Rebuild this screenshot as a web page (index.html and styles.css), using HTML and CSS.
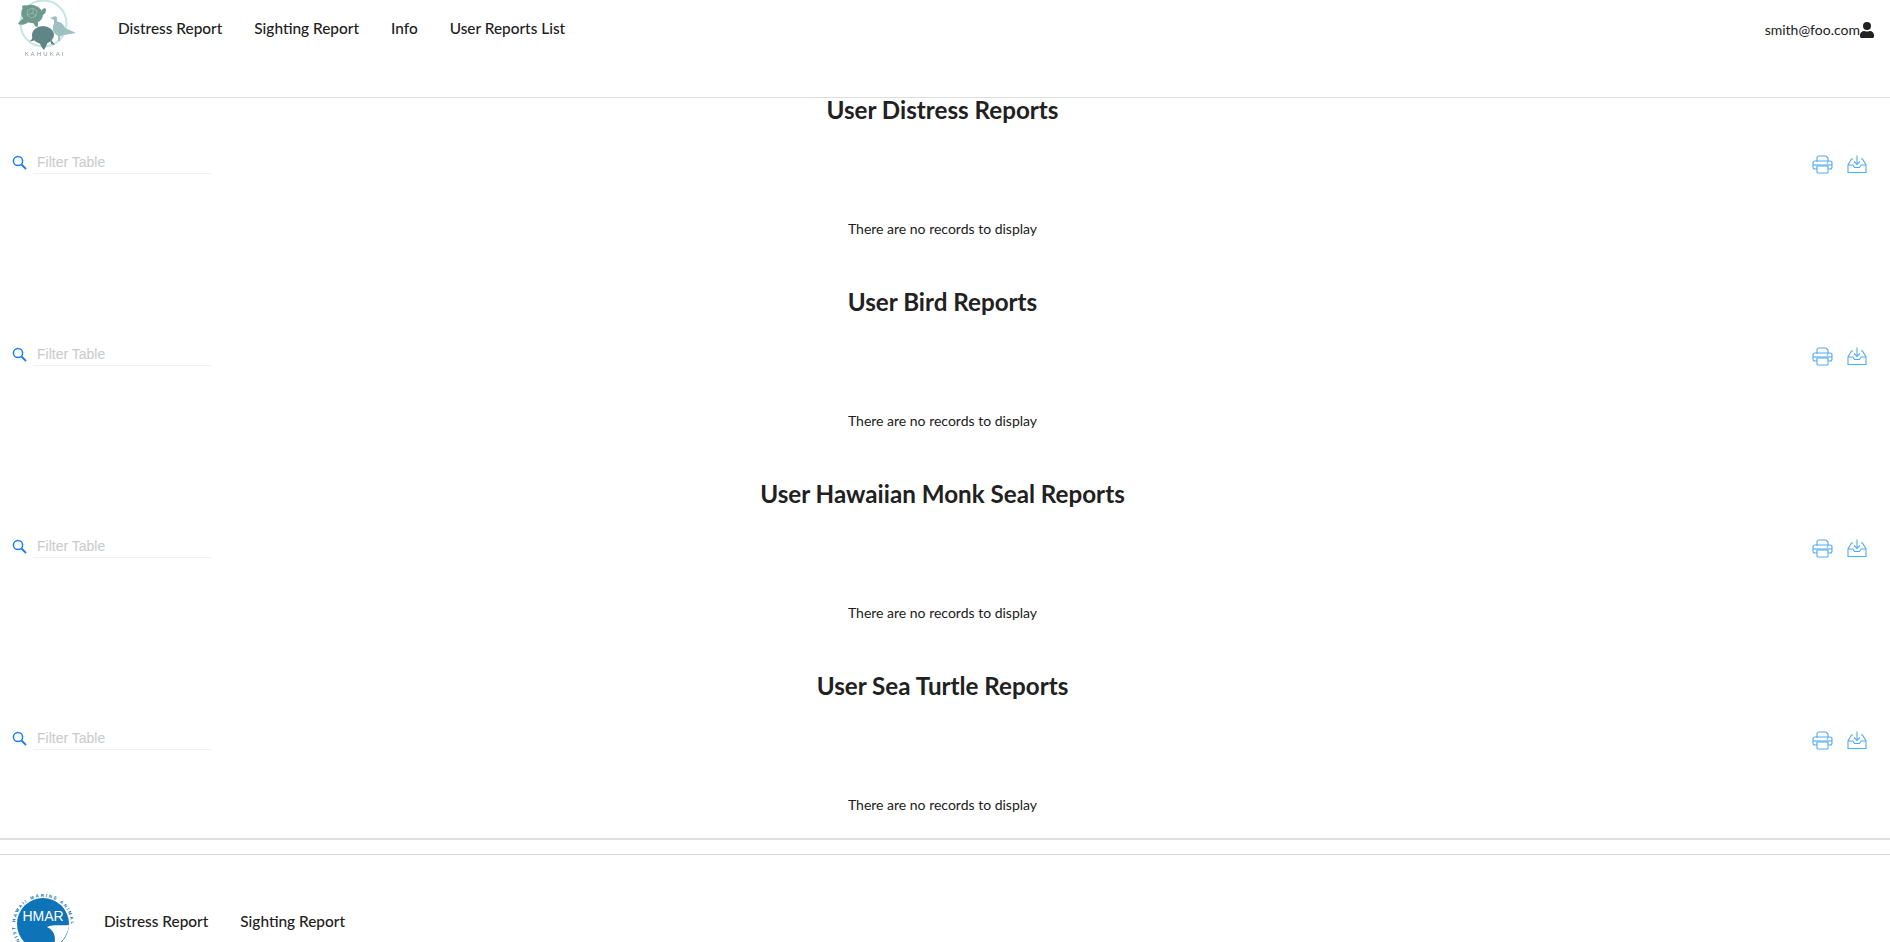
FILE: index.html
```html
<!DOCTYPE html>
<html lang="en">
<head>
  <meta charset="UTF-8">
  <title>User Reports List</title>
  <link rel="stylesheet" href="styles.css">
</head>
<body>

  <!-- Top navigation -->
  <nav class="topnav">
    <div class="brand">
      <svg class="brand-logo" width="62" height="60" viewBox="17 0 62 60">
        <circle cx="43.5" cy="23.5" r="23" fill="none" stroke="#c5e6e2" stroke-width="2"/>
        <!-- turtle -->
        <ellipse cx="32" cy="14" rx="11" ry="9" fill="#6d9a8d" transform="rotate(15 32 14)"/>
        <path d="M18 24 C20 20 24 18 27 16 L31 20 C27 24 22 26 18 24 Z M22 6 C25 4 28 6 31 8 L27 12 C24 11 22 9 22 6 Z M41 12 C42 8 46 7 46 10 C46 13 44 15 41 16 Z M33 22 L38 22 C38 25 38 27 37 27 C35 27 34 24 33 22 Z" fill="#6d9a8d"/>
        <path d="M28 10 L33 8 L37 11 L36 16 L31 18 L27 15 Z M33 8 L33 13 M27 15 L33 13 L36 16" fill="none" stroke="#a9c8bd" stroke-width="0.6"/>
        <!-- seal -->
        <ellipse cx="43" cy="35" rx="11" ry="9" fill="#5f8586"/>
        <path d="M28 41 C31 42 33 38 33 34 L38 38 C35 40 32 42 28 41 Z M39 40 L48 40 C47 44 46 47 44 50 C41 47 40 44 39 40 Z M50 38 L55 45 L51 44 Z" fill="#5f8586"/>
        <!-- bird -->
        <ellipse cx="59" cy="29" rx="6" ry="7.5" fill="#9dc0c0" transform="rotate(-25 59 29)"/>
        <path d="M50 18 L53 17 C55 15 58 17 57 20 L58 27 L54 28 L54 20 Z M62 27 C67 29 72 31 76 33 C72 34 68 34 64 35 Z M58 35 L60 35 L60 41 L58 41 Z" fill="#9dc0c0"/>
        <text class="brand-word" x="45" y="56" text-anchor="middle">KAHUKAI</text>
      </svg>
    </div>
    <ul class="nav-links">
      <li><a href="#">Distress Report</a></li>
      <li><a href="#">Sighting Report</a></li>
      <li><a href="#">Info</a></li>
      <li><a href="#">User Reports List</a></li>
    </ul>
    <div class="nav-user">
      <span>smith@foo.com</span>
      <svg width="14" height="16" viewBox="0 0 448 512"><path fill="#212121" d="M224 256a128 128 0 1 0 0-256 128 128 0 0 0 0 256zm90 32h-17a174 174 0 0 1-146 0h-17C60 288 0 348 0 422v42c0 27 21 48 48 48h352c27 0 48-21 48-48v-42c0-74-60-134-134-134z"/></svg>
    </div>
  </nav>

  <main class="reports">
    <section class="report">
      <h2>User Distress Reports</h2>
      <div class="toolbar">
        <label class="filter">
          <svg class="search-icon" width="15" height="15" viewBox="0 0 15 15"><circle cx="6" cy="6" r="4.6" fill="none" stroke="#1a7ff0" stroke-width="1.5"/><path d="M9.5 9.5 L14 14" stroke="#1a7ff0" stroke-width="1.8" fill="none"/></svg>
          <input type="text" placeholder="Filter Table">
        </label>
        <div class="actions">
          <svg width="21" height="19" viewBox="0 0 21 19"><g fill="none" stroke="#55a9ee" stroke-width="1.1"><path d="M5 7 V3 Q5 1 7 1 H14 L16 3 V7"/><rect x="1" y="6" width="19" height="8" rx="2"/><path d="M1 10 H20"/><path d="M5 11 H16 V17 Q16 18 15 18 H6 Q5 18 5 17 Z" fill="#fff"/></g><circle cx="15.5" cy="8" r="0.8" fill="#55a9ee"/></svg>
          <svg width="20" height="19" viewBox="0 0 20 19"><g fill="none" stroke="#55a9ee" stroke-width="1.1"><path d="M6 4 H4.5 L1 10 V17.5 H19 V10 L15.5 4 H14"/><path d="M1 10 H6 L7.5 12.5 H12.5 L14 10 H19"/><path d="M10 0.5 V9"/><path d="M7 6.5 L10 9.5 L13 6.5"/></g></svg>
        </div>
      </div>
      <p class="empty">There are no records to display</p>
    </section>

    <section class="report">
      <h2>User Bird Reports</h2>
      <div class="toolbar">
        <label class="filter">
          <svg class="search-icon" width="15" height="15" viewBox="0 0 15 15"><circle cx="6" cy="6" r="4.6" fill="none" stroke="#1a7ff0" stroke-width="1.5"/><path d="M9.5 9.5 L14 14" stroke="#1a7ff0" stroke-width="1.8" fill="none"/></svg>
          <input type="text" placeholder="Filter Table">
        </label>
        <div class="actions">
          <svg width="21" height="19" viewBox="0 0 21 19"><g fill="none" stroke="#55a9ee" stroke-width="1.1"><path d="M5 7 V3 Q5 1 7 1 H14 L16 3 V7"/><rect x="1" y="6" width="19" height="8" rx="2"/><path d="M1 10 H20"/><path d="M5 11 H16 V17 Q16 18 15 18 H6 Q5 18 5 17 Z" fill="#fff"/></g><circle cx="15.5" cy="8" r="0.8" fill="#55a9ee"/></svg>
          <svg width="20" height="19" viewBox="0 0 20 19"><g fill="none" stroke="#55a9ee" stroke-width="1.1"><path d="M6 4 H4.5 L1 10 V17.5 H19 V10 L15.5 4 H14"/><path d="M1 10 H6 L7.5 12.5 H12.5 L14 10 H19"/><path d="M10 0.5 V9"/><path d="M7 6.5 L10 9.5 L13 6.5"/></g></svg>
        </div>
      </div>
      <p class="empty">There are no records to display</p>
    </section>

    <section class="report">
      <h2>User Hawaiian Monk Seal Reports</h2>
      <div class="toolbar">
        <label class="filter">
          <svg class="search-icon" width="15" height="15" viewBox="0 0 15 15"><circle cx="6" cy="6" r="4.6" fill="none" stroke="#1a7ff0" stroke-width="1.5"/><path d="M9.5 9.5 L14 14" stroke="#1a7ff0" stroke-width="1.8" fill="none"/></svg>
          <input type="text" placeholder="Filter Table">
        </label>
        <div class="actions">
          <svg width="21" height="19" viewBox="0 0 21 19"><g fill="none" stroke="#55a9ee" stroke-width="1.1"><path d="M5 7 V3 Q5 1 7 1 H14 L16 3 V7"/><rect x="1" y="6" width="19" height="8" rx="2"/><path d="M1 10 H20"/><path d="M5 11 H16 V17 Q16 18 15 18 H6 Q5 18 5 17 Z" fill="#fff"/></g><circle cx="15.5" cy="8" r="0.8" fill="#55a9ee"/></svg>
          <svg width="20" height="19" viewBox="0 0 20 19"><g fill="none" stroke="#55a9ee" stroke-width="1.1"><path d="M6 4 H4.5 L1 10 V17.5 H19 V10 L15.5 4 H14"/><path d="M1 10 H6 L7.5 12.5 H12.5 L14 10 H19"/><path d="M10 0.5 V9"/><path d="M7 6.5 L10 9.5 L13 6.5"/></g></svg>
        </div>
      </div>
      <p class="empty">There are no records to display</p>
    </section>

    <section class="report">
      <h2>User Sea Turtle Reports</h2>
      <div class="toolbar">
        <label class="filter">
          <svg class="search-icon" width="15" height="15" viewBox="0 0 15 15"><circle cx="6" cy="6" r="4.6" fill="none" stroke="#1a7ff0" stroke-width="1.5"/><path d="M9.5 9.5 L14 14" stroke="#1a7ff0" stroke-width="1.8" fill="none"/></svg>
          <input type="text" placeholder="Filter Table">
        </label>
        <div class="actions">
          <svg width="21" height="19" viewBox="0 0 21 19"><g fill="none" stroke="#55a9ee" stroke-width="1.1"><path d="M5 7 V3 Q5 1 7 1 H14 L16 3 V7"/><rect x="1" y="6" width="19" height="8" rx="2"/><path d="M1 10 H20"/><path d="M5 11 H16 V17 Q16 18 15 18 H6 Q5 18 5 17 Z" fill="#fff"/></g><circle cx="15.5" cy="8" r="0.8" fill="#55a9ee"/></svg>
          <svg width="20" height="19" viewBox="0 0 20 19"><g fill="none" stroke="#55a9ee" stroke-width="1.1"><path d="M6 4 H4.5 L1 10 V17.5 H19 V10 L15.5 4 H14"/><path d="M1 10 H6 L7.5 12.5 H12.5 L14 10 H19"/><path d="M10 0.5 V9"/><path d="M7 6.5 L10 9.5 L13 6.5"/></g></svg>
        </div>
      </div>
      <p class="empty">There are no records to display</p>
    </section>
  </main>

  <!-- Footer -->
  <footer class="footer">
    <svg class="footer-logo" width="62" height="62" viewBox="0 0 62 62">
      <defs><path id="ring" d="M8 48 A28 28 0 1 1 54 48"/></defs>
      <text class="hmar-ring"><textPath href="#ring">NIST HAWAII MARINE ANIMAL</textPath></text>
      <circle cx="31" cy="31" r="26" fill="#0f73b8"/>
      <path d="M35 34 C42 31 50 33 57 32 C56 42 50 50 40 55 C45 48 44 38 35 34 Z" fill="#fff"/>
      <text class="hmar" x="31" y="28" text-anchor="middle">HMAR</text>
    </svg>
    <a href="#">Distress Report</a>
    <a href="#">Sighting Report</a>
  </footer>

</body>
</html>
```

FILE: styles.css
```css
html, body {
  margin: 0;
  padding: 0;
  overflow: hidden;
}
body {
  font-family: Lato, "Open Sans", sans-serif;
  color: #212121;
  background-color: #fff;
}
a {
  color: #212121;
  text-decoration: none;
}

/* top navigation */
.topnav {
  display: flex;
  align-items: flex-start;
  height: 97px;
  border-bottom: 1px solid #dedede;
}
.brand {
  width: 118px;
  padding-left: 17px;
  box-sizing: border-box;
}
.brand-logo {
  display: block;
  filter: blur(0.3px);
}
.brand-word {
  font-family: Lato, sans-serif;
  font-size: 6px;
  letter-spacing: 2px;
  fill: #8a9a9a;
}
.nav-links {
  display: flex;
  gap: 32px;
  list-style: none;
  margin: 0;
  padding: 18px 0 0 0;
  font-size: 15.4px;
  font-weight: 500;
  line-height: 20px;
}
.nav-user {
  display: flex;
  align-items: center;
  margin-left: auto;
  padding: 20px 16px 0 0;
  font-size: 14px;
  line-height: 20px;
}

/* report sections */
.reports {
  margin-top: -1px;
  padding-right: 5px;
  border-bottom: 2px solid #e0e0e0;
}
.report {
  height: 192px;
}
.report:last-child {
  height: 165px;
}
.report h2 {
  margin: 0;
  font-size: 24.2px;
  font-weight: 700;
  line-height: 26px;
  text-align: center;
}
.toolbar {
  display: flex;
  justify-content: space-between;
  height: 96px;
  box-sizing: border-box;
  padding: 27px 18px 0 12px;
}
.filter {
  display: flex;
  align-items: center;
  height: 24px;
}
.search-icon {
  margin-right: 6px;
}
.filter input {
  width: 178px;
  height: 24px;
  padding: 0 4px;
  border: none;
  border-bottom: 1px solid #f0f0f0;
  font-family: "Liberation Sans", Arial, sans-serif;
  font-size: 14px;
  outline: none;
  box-sizing: border-box;
}
.filter input::placeholder {
  color: #c9c9c9;
}
.actions {
  display: flex;
  gap: 14px;
  padding-top: 5px;
}
.empty {
  margin: 0;
  font-size: 14px;
  line-height: 20px;
  text-align: center;
}

/* footer */
.footer {
  display: flex;
  align-items: flex-start;
  gap: 32px;
  margin-top: 14px;
  padding: 38px 0 0 12px;
  border-top: 1px solid #d6d6d6;
  font-size: 15.4px;
  font-weight: 500;
  line-height: 20px;
}
.footer a {
  margin-top: 18px;
}
.footer-logo {
  flex: none;
  margin-right: -2px;
}
.hmar {
  font-family: "Liberation Sans", Arial, sans-serif;
  font-size: 14px;
  fill: #fff;
}
.hmar-ring {
  font-family: "Liberation Sans", Arial, sans-serif;
  font-size: 4.5px;
  font-weight: 700;
  letter-spacing: 1.6px;
  fill: #0f73b8;
}
```
